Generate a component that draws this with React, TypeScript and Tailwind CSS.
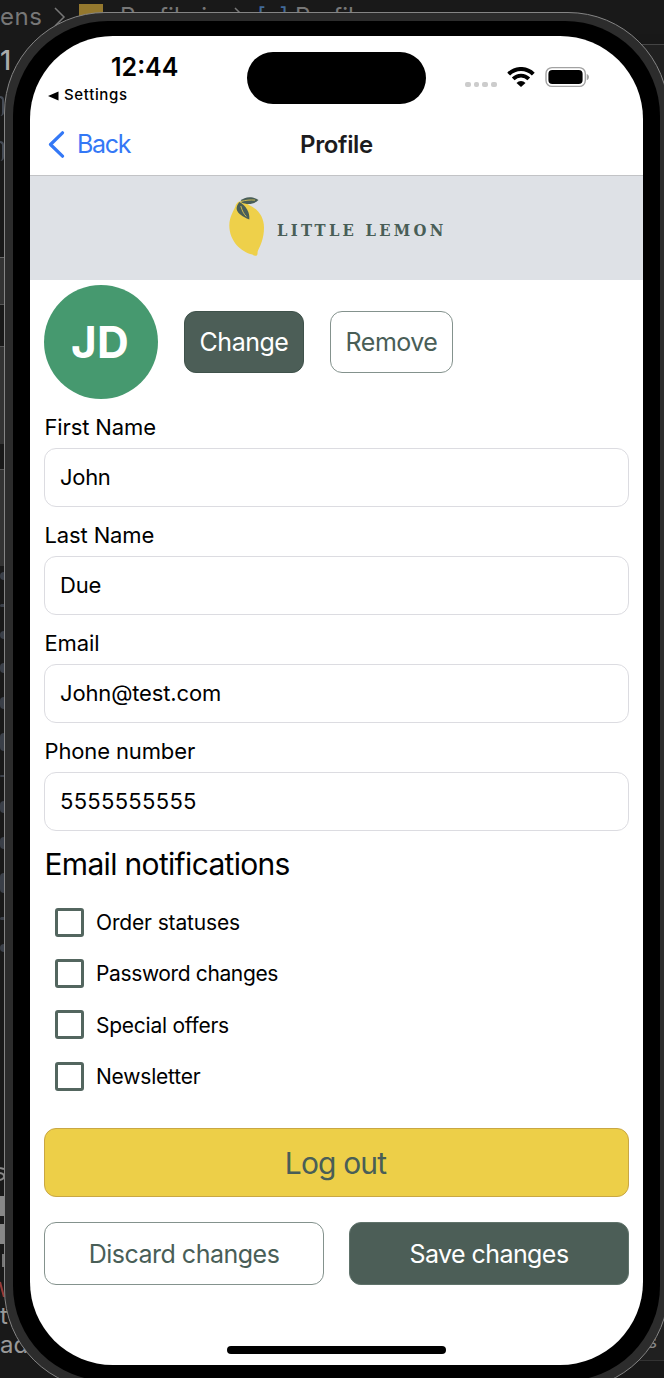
import React from "react";

const fields = [
  { label: "First Name", value: "John", valueTracking: "tracking-[-0.3px]" },
  { label: "Last Name", value: "Due", valueTracking: "tracking-[-0.2px]" },
  { label: "Email", value: "John@test.com", valueTracking: "tracking-[-0.15px]" },
  { label: "Phone number", value: "5555555555", valueTracking: "tracking-[0.3px]" },
];

const options = [
  { name: "Order statuses", tracking: "tracking-[-0.15px]" },
  { name: "Password changes", tracking: "tracking-[-0.37px]" },
  { name: "Special offers", tracking: "tracking-[-0.25px]" },
  { name: "Newsletter", tracking: "tracking-[-0.2px]" },
];

function Chevron({ className }: { className: string }) {
  return (
    <svg className={"h-5 w-3 shrink-0 " + className} viewBox="0 0 12 20" fill="none" stroke="#777" strokeWidth="1.5">
      <path d="M1 1l9 9-9 9" />
    </svg>
  );
}

function Editor() {
  return (
    <div className="absolute inset-0 flex flex-col overflow-hidden bg-[#191919]">
      <div className="flex h-[34px] shrink-0 items-center whitespace-nowrap text-[24px] text-[#777]">
        <span className="w-[54px] shrink-0 tracking-[0.5px]">ens</span>
        <Chevron className="mr-[13px]" />
        <span className="mt-[-2px] mr-[17px] h-6 w-6 shrink-0 bg-[#94782e]" />
        <span className="w-[114px] shrink-0 tracking-[0.2px]">Profile.js</span>
        <Chevron className="mr-[11px]" />
        <span className="w-[38px] shrink-0 text-[#416a99]">[ø]</span>
        <span>Profile</span>
      </div>
      <div className="flex grow">
        <div className="flex w-[332px] flex-col">
          <div className="h-[223px] pt-[7px] text-[27px] leading-[40px] font-medium text-[#aaa]">
            1
            <div className="mt-[15px] h-[20px] w-[4px] rounded-r-full border-t-2 border-r-2 border-[#454b55]" />
            <div className="mt-[25px] h-[20px] w-[4px] rounded-r-full border-t-2 border-r-2 border-[#454b55]" />
          </div>
          <div className="h-[47px] border-t border-[#666] bg-[#333]" />
          <div className="h-[43px] border-y border-[#555]" />
          <div className="h-[97px] bg-[#333]" />
          <div className="h-[26px] border-b border-[#555]" />
          <div className="h-[96px] bg-[#333]" />
          <div className="flex flex-col gap-[24px] pt-[6px]">
            {[8, 3, 8, 10, 12, 18, 2, 12, 12, 20, 3, 8].map((h, i) => (
              <i key={i} className="w-[4px] rounded-l-full bg-[#3a3f48]" style={{ height: h }} />
            ))}
          </div>
          <div className="mt-auto flex h-[218px] flex-col text-[24px] leading-[29px] text-[#999]">
            <svg className="mt-[7px] h-[14px] w-[5px]" viewBox="0 0 5 14" fill="none" stroke="#888" strokeWidth="2"><path d="M4 2L0 1M0 6c6 1 5 6 0 7" /></svg>
            <div className="mt-[15px] h-[20px] w-[4px] bg-[#888]" />
            <div className="mt-[8px] h-[20px] w-[4px] bg-[#888]" />
            <div className="ml-[2px] mt-[10px] h-[13px] w-[2px] bg-[#777]" />
            <svg className="mt-[14px] h-[16px] w-[5px]" viewBox="0 0 5 16" stroke="#983b38" strokeWidth="2"><path d="M0 1l4 15" /></svg>
            <div className="mt-[4px]">t</div>
            <div>ad</div>
          </div>
        </div>
        <div className="flex grow flex-col bg-[#181818] pt-[10px]">
          <div className="flex grow flex-col justify-end border-t border-[#444] bg-[#202020]">
            <div className="flex h-[52px] items-center justify-end border-b border-[#333] pt-[14px] pr-[7px] text-[18px] text-[#888]">s</div>
            <div className="h-[17px] bg-[#181818]" />
          </div>
        </div>
      </div>
    </div>
  );
}

function StatusBar() {
  return (
    <div className="flex h-[77px] shrink-0">
      <div className="w-[217px] pl-[18px] pt-[15px]">
        <div className="pl-[63px] text-[25px] leading-[33px] font-semibold tracking-[0px]">12:44</div>
        <div className="flex h-[23px] items-center gap-[5px] text-[15px] font-medium tracking-[0.65px]">
          <svg className="h-[10px] w-[11px]" viewBox="0 0 11 10"><path d="M0 5L10.5 .4v9.2z" /></svg>
          <span>Settings</span>
        </div>
      </div>
      <div className="mt-[16px] h-[52px] w-[179px] rounded-full bg-black" />
      <div className="ml-[39px] mt-[29px] flex h-[24px]">
        <div className="mt-[16.5px] flex gap-[3.2px]">
          <i className="h-[5.5px] w-[5.5px] rounded-[2px] bg-[#ccc]" />
          <i className="h-[5.5px] w-[5.5px] rounded-[2px] bg-[#ccc]" />
          <i className="h-[5.5px] w-[5.5px] rounded-[2px] bg-[#ccc]" />
          <i className="h-[5.5px] w-[5.5px] rounded-[2px] bg-[#ccc]" />
        </div>
        <svg className="ml-[10px] mt-[1.5px] h-[20px] w-[28px]" viewBox="0 0 28 20">
          <path d="M1.700 7.100a17.300 17.300 0 0 1 24.600 0" fill="none" stroke="#000" strokeWidth="4" />
          <path d="M6.200 11.900a11 11 0 0 1 15.600 0" fill="none" stroke="#000" strokeWidth="3.8" />
          <path d="M14 20l-4.500-4a6.300 6.300 0 0 1 9 0z" />
        </svg>
        <svg className="ml-[10.5px] mt-[1px] h-[22px] w-[45px]" viewBox="0 0 45 22">
          <rect x="1" y="1.6" width="39.3" height="18.8" rx="6" fill="none" stroke="#a2a2a2" strokeWidth="1.4" />
          <rect x="3.4" y="4" width="34.2" height="14" rx="4" />
          <path d="M41.700 8c3 .7 3 5.500 0 6.200z" fill="#a2a2a2" />
        </svg>
      </div>
    </div>
  );
}

function Logo() {
  return (
    <div className="flex h-[104px] w-full shrink-0 items-center bg-[#dee1e6] pl-[199px]">
      <svg className="-mt-[2px] h-[62px] w-[36px] shrink-0" viewBox="0 0 36 62">
        <path d="M9 6c3-1 7-.5 11 3 9 4 15 12 15 22.500 0 11-3.500 18-6.200 23.500-.5 1.500.2 3-1 4.500-1.500.8-3 .2-4.500-1C12 56 .3 45 .3 29.500.3 20 5 15 7 8.500z" fill="#eed04a" />
        <path d="M11.500 5C16 0 24 .500 29.500 4 25 8.500 18 9 12.500 6.500z" fill="#495e57" />
        <path d="M10.500 6c-5 6-4.500 11.500 9.800 17.500C21 16 17 10 10.500 6z" fill="#495e57" />
        <path d="M12 5.500c5-1.500 9-1.700 14-1.400M11.800 10c1.400 5 3 8 5.500 10.500" fill="none" stroke="#dcc551" strokeWidth=".9" />
      </svg>
      <span className="ml-[12px] pt-[5px] whitespace-nowrap font-['DejaVu_Serif_Condensed','DejaVu_Serif',serif] text-[16.5px] leading-[20px] font-bold tracking-[3.25px] text-[#495e57]">LITTLE LEMON</span>
    </div>
  );
}

export default function App() {
  return (
    <main className="relative h-[1378px] w-[664px] overflow-hidden font-['Inter',sans-serif] text-black">
      <Editor />
      <div className="relative mt-[12px] ml-[4px] h-[1378px] w-[665px] rounded-[101px] border border-[#858585] bg-[#2c2c2c] p-[8px]">
        <div className="h-full w-full rounded-[95px] bg-black pt-[15px] pl-[17px]">
          <div className="flex h-[1329px] w-[613px] flex-col overflow-hidden rounded-[83px] bg-white">
            <StatusBar />
            <header className="flex h-[63px] shrink-0 items-center border-b border-[#c2c3c6] pl-[18px]">
              <div className="flex w-[252px] items-center gap-[12px] text-[25px] text-[#3478f6]">
                <svg className="h-[27px] w-[17px]" viewBox="0 0 17 27" fill="none" stroke="#3478f6" strokeWidth="3.2" strokeLinecap="round" strokeLinejoin="round">
                  <path d="M14.500 1.800L2.500 13.500l12 11.700" />
                </svg>
                <span className="pt-[2px] tracking-[-1.3px]">Back</span>
              </div>
              <h1 className="pt-px text-[24px] font-semibold tracking-[-0.35px] text-[#1c1c1e]">Profile</h1>
            </header>
            <Logo />
            <section className="px-[14px] pt-[5px]">
              <div className="flex h-[114px] items-center">
                <div className="flex h-[114px] w-[114px] items-center justify-center rounded-full bg-[#46996f] pr-[2px] text-[44px] font-bold tracking-[0.2px] text-white">JD</div>
                <button className="ml-[26px] h-[62px] w-[120px] rounded-[12px] border border-[#3f524b] bg-[#4c5e57] pt-[2px] text-[25px] tracking-[-0.5px] text-white">Change</button>
                <button className="ml-[26px] h-[62px] w-[123px] rounded-[12px] border border-[#84928d] pt-[2px] text-[25px] tracking-[-0.5px] text-[#495e57]">Remove</button>
              </div>
              {fields.map((f) => (
                <label key={f.label} className="mt-[12px] block">
                  <span className="mb-[4px] block h-[33px] pl-[0.5px] text-[22px] leading-[33px] tracking-[-0.13px]">{f.label}</span>
                  <span className={"flex h-[59px] items-center rounded-[12px] border border-[#dcdce1] px-[15px] text-[22px] " + f.valueTracking}>{f.value}</span>
                </label>
              ))}
              <h2 className="mt-[13px] h-[40px] pl-[0.5px] text-[30px] leading-[40px] tracking-[-0.68px]">Email notifications</h2>
              <div className="mt-[12.5px] pl-[11px]">
                {options.map((o) => (
                  <div key={o.name} className="flex h-[51.4px] items-center gap-[12px]">
                    <span className="h-[29px] w-[29px] rounded-[3px] border-[3px] border-[#53665f]" />
                    <span className={"pt-px text-[21px] " + o.tracking}>{o.name}</span>
                  </div>
                ))}
              </div>
              <button className="mt-[25.5px] block h-[69px] w-full rounded-[12px] border border-[#c9a744] bg-[#edcf48] pt-[2px] pr-[2px] text-[30px] tracking-[-0.85px] text-[#495e57]">Log out</button>
              <div className="mt-[25px] flex gap-[25px]">
                <button className="h-[63px] grow basis-0 rounded-[12px] border border-[#84928d] pt-[3px] text-[25px] tracking-[-0.5px] text-[#495e57]">Discard changes</button>
                <button className="h-[63px] grow basis-0 rounded-[12px] border border-[#60736b] bg-[#4c5e57] pt-[3px] text-[25px] tracking-[-0.57px] text-white">Save changes</button>
              </div>
            </section>
            <div className="mx-auto mt-auto mb-[11px] h-[8px] w-[219px] rounded-full bg-black" />
          </div>
        </div>
      </div>
    </main>
  );
}
